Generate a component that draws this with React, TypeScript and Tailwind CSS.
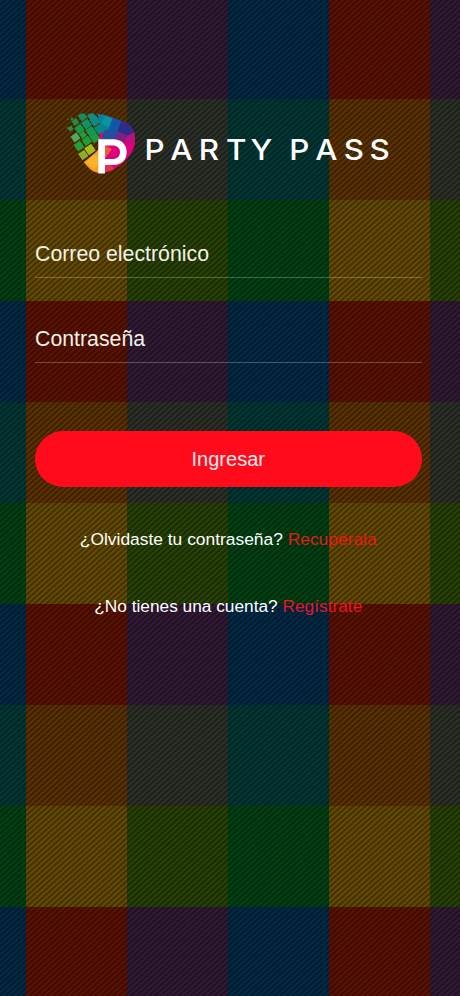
const columns = ["blue", "red", "purple", "blue", "red", "purple"];

// One entry per band of the cloth: first, second and third thread colour
const bands = [
  ["bg-[#002b49]", "bg-[#5f1200]", "bg-[#331a37]"],
  ["bg-[#003a37]", "bg-[#5e3300]", "bg-[#2d3229]"],
  ["bg-[#004414]", "bg-[#674c00]", "bg-[#294405]"],
];

const rows = [0, 1, 2, 0, 1, 2, 0, 1, 2, 0];

function Background() {
  return (
    <div className="absolute inset-0 overflow-hidden" aria-hidden="true">
      <div className="grid h-full grid-cols-[26px_101px_101px_101px_100.5px_30.5px] grid-rows-[99px_101px_101px_101px_101px_101px_101px_101px_101px_89px]">
        {rows.map((row, y) =>
          columns.map((_, x) => <div key={`${y}-${x}`} className={bands[row][x % 3]} />)
        )}
      </div>
      <div className="absolute inset-0 bg-[repeating-linear-gradient(-42deg,rgba(0,0,0,0.4)_0px,rgba(0,0,0,0.3)_1px,rgba(0,0,0,0)_2px,rgba(0,0,0,0)_2.8px,rgba(0,0,0,0.4)_4px)]" />
    </div>
  );
}

// centre x, centre y, size, colour
const tiles: [number, number, number, string][] = [
  [68, 119.5, 1.6, "#2c6c42"],
  [67.5, 128, 1.8, "#2a7040"],
  [72, 119, 2.6, "#2f7d50"],
  [75.5, 122, 5.8, "#1f8a4a"],
  [82.5, 116.5, 7, "#128f5c"],
  [91.5, 116, 6.6, "#0f8f78"],
  [70.5, 128.5, 4.4, "#2b8a48"],
  [79.5, 129, 7.4, "#169a4a"],
  [86.5, 124, 7.8, "#0d9467"],
  [95, 121, 8, "#0b8c8c"],
  [75.5, 137.5, 7.2, "#4fa866"],
  [83, 134.8, 5.6, "#1fa044"],
  [90.8, 131.3, 7.8, "#12994f"],
  [99.5, 129, 8.2, "#078a7d"],
  [79, 146, 7.8, "#1fa03c"],
  [86.8, 140.8, 7.6, "#18a03d"],
  [95, 137.8, 7.8, "#1b9b48"],
  [83.3, 155, 7.4, "#8fae28"],
  [90, 149.5, 8.4, "#a3bd1f"],
];

function Logo() {
  return (
    <svg viewBox="64 108 330 70" className="block h-[70px] w-[330px]" role="img" aria-label="Party Pass">
      <defs>
        <clipPath id="pick">
          <path d="M64 113.500H92C101 113 113 117.500 124 122C132.500 125.500 135.500 132 135 142C134 154 123 165 111 170.500C101 175 93 173 88 167L74 152L64 134Z" />
        </clipPath>
      </defs>
      <g clipPath="url(#pick)">
        <path d="M102 112H140V180H96L99 138Z" fill="#df007c" />
        <path d="M97 112L106 112L116 120L112 132L104 137L100 124Z" fill="#087f9c" />
        <path d="M105 116L114 119L108 127L101 123Z" fill="#0794a5" />
        <path d="M113 117L124 121L118 134L108 131Z" fill="#1058a6" />
        <path d="M122 119L137 125L134 135L126 137L117 133Z" fill="#302c8b" />
        <path d="M104 130L117 130L124 136L120 145L101 142Z" fill="#234f9d" />
        <path d="M118 132L127 135L124 145L114 139Z" fill="#7b2384" />
        <path d="M127 136L136 131V140L129 144Z" fill="#b4147e" />
        <path d="M84 162L94 154L102 146V180H88Z" fill="#f7a01f" />
        <path d="M94 154L102 161L94 169L86 162Z" fill="#fbb12c" />
        <path d="M104 145L112 149L104 160Z" fill="#ed5a38" />
        <path d="M104 164L112 166L116 173L104 176Z" fill="#e8304f" />
        {tiles.map(([x, y, size, fill]) => (
          <rect
            key={`${x}-${y}`}
            x={x - size / 2}
            y={y - size / 2}
            width={size}
            height={size}
            rx="0.4"
            fill={fill}
            transform={`rotate(-35 ${x} ${y})`}
          />
        ))}
      </g>
      <path
        fillRule="evenodd"
        fill="#fff"
        d="M98.300 139.300H113C121.500 139.300 126.700 144.500 126.700 152C126.700 160 121.500 165 113 165H105V173.500H98.300ZM105 145.500V159H112.500C117 159 120 156.500 120 152C120 148 117 145.500 112.500 145.500Z"
      />
      <text
        transform="scale(1.1 1)"
        x="131.300 154.700 180.600 205.400 227.800 263 286.500 312.500 336"
        y="160"
        fill="#fff"
        fontFamily="Inter, sans-serif"
        fontSize="28.500"
        fontWeight="550"
      >
        PARTYPASS
      </text>
    </svg>
  );
}

function Field({ label, type }: { label: string; type: string }) {
  return (
    <input
      type={type}
      placeholder={label}
      aria-label={label}
      className="block h-[49px] w-full border-b border-white/25 bg-transparent pt-[3px] text-[21.3px] text-white outline-none placeholder:text-[#f3f1e9]"
    />
  );
}

export default function App() {
  return (
    <main className="relative h-[996px] w-[460px] overflow-hidden bg-black font-['Liberation_Sans',Arial,sans-serif]">
      <Background />
      <div className="relative flex flex-col pt-[108px] pr-[38.5px] pl-[35px]">
        <div className="ml-[29px]">
          <Logo />
        </div>
        <form className="mt-[51px] flex flex-col" onSubmit={(e) => e.preventDefault()}>
          <div className="flex flex-col gap-9">
            <Field label="Correo electrónico" type="email" />
            <Field label="Contraseña" type="password" />
          </div>
          <button
            type="submit"
            className="mt-[68px] h-14 w-full rounded-full bg-[#ff0b1c] text-[20px] text-[#ffe9ea]"
          >
            Ingresar
          </button>
        </form>
        <p className="mt-10 text-center text-[17.4px] leading-6 whitespace-nowrap text-white">
          ¿Olvidaste tu contraseña? <a href="#" className="text-[#e41a16]">Recupérala</a>
        </p>
        <p className="mt-[43px] text-center text-[17.3px] leading-6 whitespace-nowrap text-white">
          ¿No tienes una cuenta? <a href="#" className="text-[#e8171f]">Regístrate</a>
        </p>
      </div>
    </main>
  );
}
